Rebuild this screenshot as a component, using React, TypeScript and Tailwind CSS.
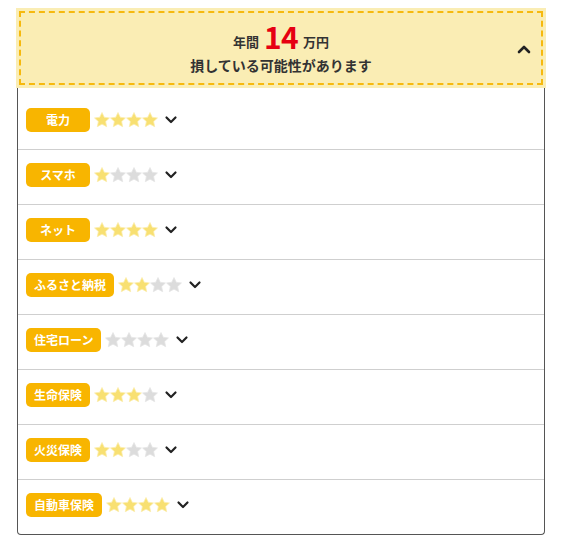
import React from 'react';

interface Item {
  label: string;
  stars: number;
}

const items: Item[] = [
  { label: '電力', stars: 4 },
  { label: 'スマホ', stars: 1 },
  { label: 'ネット', stars: 4 },
  { label: 'ふるさと納税', stars: 2 },
  { label: '住宅ローン', stars: 0 },
  { label: '生命保険', stars: 3 },
  { label: '火災保険', stars: 2 },
  { label: '自動車保険', stars: 4 },
];

function Star({ on }: { on: boolean }) {
  return (
    <svg width="16" height="16" viewBox="0 0 24 24" className="shrink-0">
      <path
        d="M12 0.8l3.4 7.1 7.8 1-5.7 5.4 1.5 7.7L12 18.2 5 22l1.5-7.7L0.8 8.9l7.8-1z"
        fill={on ? '#f8e072' : '#dcdcdc'}
        stroke={on ? '#fbeeb0' : '#e6e6e6'}
        strokeWidth="1.2"
        strokeLinejoin="round"
      />
    </svg>
  );
}

function Chevron({ up = false }: { up?: boolean }) {
  return (
    <svg width="14" height="14" viewBox="0 0 14 14" className="shrink-0">
      <path
        d={up ? 'M2 10l5-5 5 5' : 'M2.5 4.5l4.5 4.5 4.5-4.5'}
        fill="none"
        stroke="#222"
        strokeWidth={up ? 2.6 : 2.2}
        strokeLinecap="round"
        strokeLinejoin="round"
      />
    </svg>
  );
}

export default function App() {
  return (
    <div
      className="w-[562px] h-[545px] bg-white pt-[8px] pl-[16px] text-[#333]"
      style={{ fontFamily: '"Noto Sans CJK JP", "Noto Sans", sans-serif' }}
    >
      <div className="w-[530px]">
        {/* Summary header */}
        <div className="bg-[#faedb4] p-[3px]">
          <div className="relative h-[74px] border-2 border-dashed border-[#f6b90e] flex flex-col items-center justify-center">
            <div className="flex items-end font-bold leading-none mt-[-3px]">
              <span className="text-[13px] mb-[3px]">年間</span>
              <span className="text-[30px] text-[#e60012] mx-[5px] tracking-tight">14</span>
              <span className="text-[13px] mb-[3px]">万円</span>
            </div>
            <div className="text-[14px] font-bold leading-none mt-[7px]">損している可能性があります</div>
            <div className="absolute right-[10px] top-[29px]">
              <Chevron up />
            </div>
          </div>
        </div>

        {/* Category list */}
        <div className="mx-[1px] border border-t-0 border-[#555] rounded-b-[4px] pt-[7px]">
          {items.map((item, idx) => (
            <div
              key={item.label}
              className={`flex items-center pl-[8px] pt-[13px] pb-[17px] ${
                idx < items.length - 1 ? 'border-b border-[#cfcfcf]' : ''
              }`}
            >
              <span className="h-[24px] min-w-[64px] px-[8px] rounded-[5px] bg-[#f8b500] text-white text-[12px] font-bold flex items-center justify-center leading-none">
                {item.label}
              </span>
              <div className="flex ml-[4px]">
                {[0, 1, 2, 3].map((i) => (
                  <Star key={i} on={i < item.stars} />
                ))}
              </div>
              <div className="ml-[6px]">
                <Chevron />
              </div>
            </div>
          ))}
        </div>
      </div>
    </div>
  );
}
